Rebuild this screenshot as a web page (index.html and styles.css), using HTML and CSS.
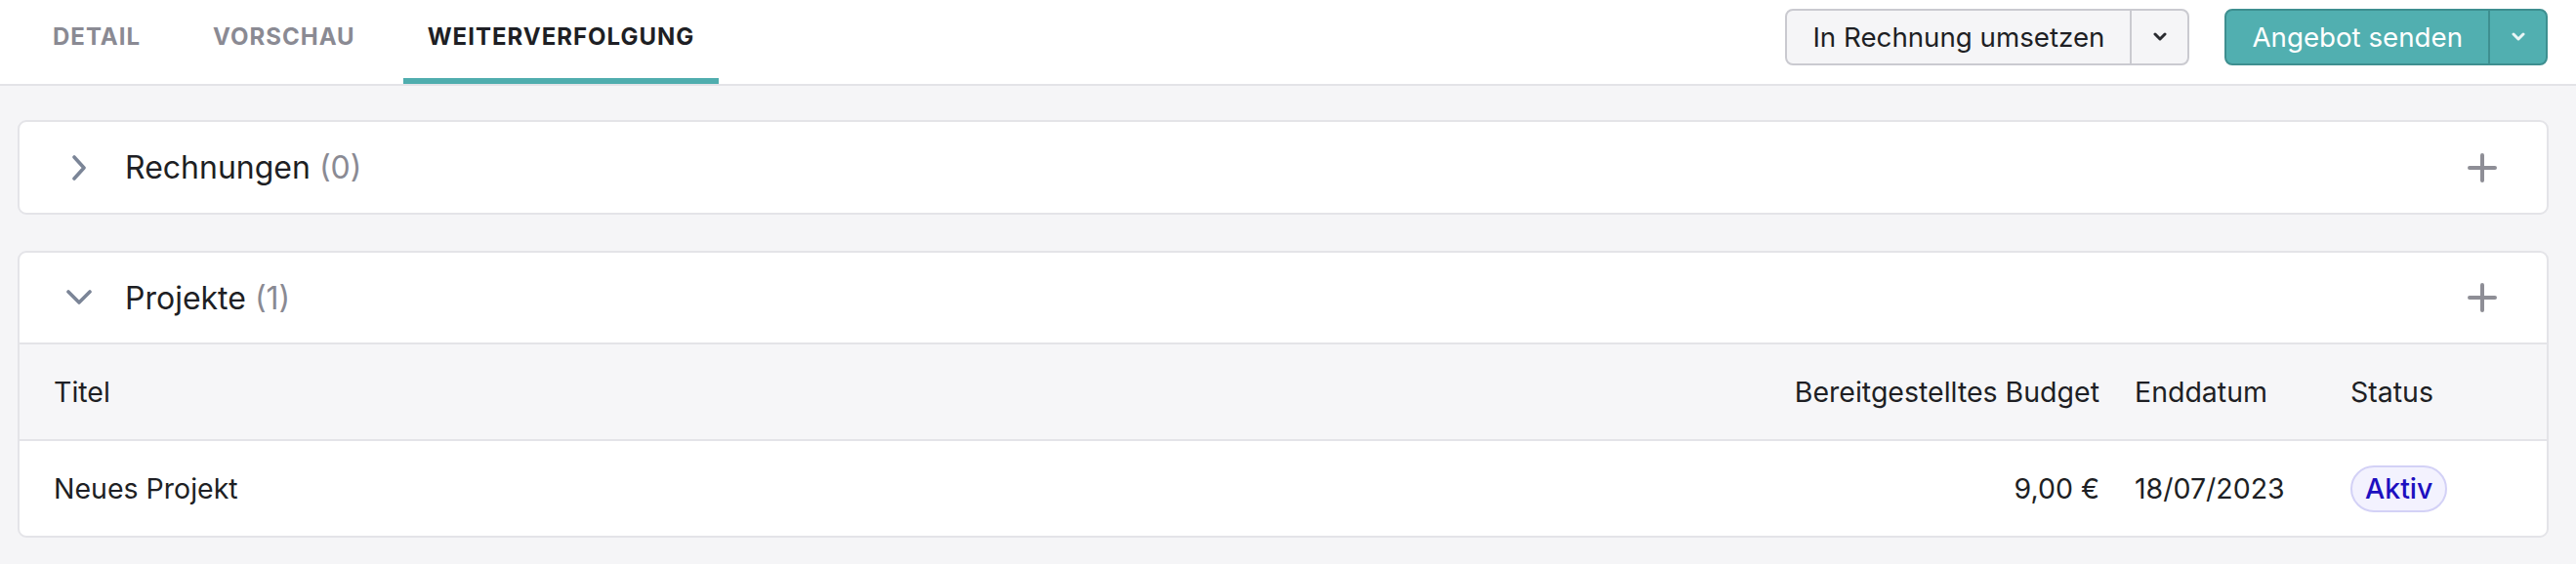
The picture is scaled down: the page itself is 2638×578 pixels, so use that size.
FILE: index.html
```html
<!DOCTYPE html>
<html lang="de">
<head>
<meta charset="utf-8">
<link rel="stylesheet" href="styles.css">
</head>
<body>
<header class="topbar">
  <nav class="tabs">
    <a class="tab">DETAIL</a>
    <a class="tab">VORSCHAU</a>
    <a class="tab active">WEITERVERFOLGUNG</a>
  </nav>
  <div class="actions">
    <div class="split split-light">
      <span class="split-main">In Rechnung umsetzen</span>
      <span class="split-caret"><svg width="14" height="10" viewBox="0 0 14 10"><polyline points="2,2 7,7 12,2" fill="none" stroke="currentColor" stroke-width="3" stroke-linecap="round" stroke-linejoin="round"/></svg></span>
    </div>
    <div class="split split-primary">
      <span class="split-main">Angebot senden</span>
      <span class="split-caret"><svg width="14" height="10" viewBox="0 0 14 10"><polyline points="2,2 7,7 12,2" fill="none" stroke="currentColor" stroke-width="3" stroke-linecap="round" stroke-linejoin="round"/></svg></span>
    </div>
  </div>
</header>
<main class="content">
  <section class="card">
    <div class="card-head">
      <span class="toggle"><svg width="24" height="26" viewBox="0 0 24 26"><polyline points="7,2 17,13 7,24" fill="none" stroke="currentColor" stroke-width="3.6" stroke-linecap="round" stroke-linejoin="round"/></svg></span>
      <h2 class="card-title">Rechnungen <span class="count">(0)</span></h2>
      <span class="add"><svg width="30" height="30" viewBox="0 0 30 30"><path d="M15 2V28M2 15H28" stroke="currentColor" stroke-width="4" stroke-linecap="round"/></svg></span>
    </div>
  </section>
  <section class="card">
    <div class="card-head card-head-open">
      <span class="toggle"><svg width="26" height="26" viewBox="0 0 26 26"><polyline points="2,7 13,18 24,7" fill="none" stroke="currentColor" stroke-width="3.6" stroke-linecap="round" stroke-linejoin="round"/></svg></span>
      <h2 class="card-title">Projekte <span class="count">(1)</span></h2>
      <span class="add"><svg width="30" height="30" viewBox="0 0 30 30"><path d="M15 2V28M2 15H28" stroke="currentColor" stroke-width="4" stroke-linecap="round"/></svg></span>
    </div>
    <div class="table">
      <div class="row row-head">
        <div class="cell c-title">Titel</div>
        <div class="cell c-budget">Bereitgestelltes Budget</div>
        <div class="cell c-date">Enddatum</div>
        <div class="cell c-status">Status</div>
      </div>
      <div class="row">
        <div class="cell c-title">Neues Projekt</div>
        <div class="cell c-budget">9,00 €</div>
        <div class="cell c-date">18/07/2023</div>
        <div class="cell c-status"><span class="badge">Aktiv</span></div>
      </div>
    </div>
  </section>
</main>
</body>
</html>
```
FILE: styles.css
```css
* { box-sizing: border-box; }
html, body { margin: 0; padding: 0; }
body {
  font-family: Inter, "Noto Sans", sans-serif;
  background: #f5f5f7;
  color: #1e1f24;
  width: 2638px;
  height: 578px;
  overflow: hidden;
}
.topbar {
  height: 88px;
  background: #fff;
  border-bottom: 2px solid #e3e3e7;
  display: flex;
  justify-content: space-between;
  align-items: flex-start;
  padding: 0 29px 0 29px;
}
.tabs {
  display: flex;
  gap: 24px;
  height: 86px;
}
.tab {
  height: 86px;
  padding: 0 25px 6px;
  border-bottom: 6px solid transparent;
  display: flex;
  align-items: center;
  font-size: 24px;
  font-weight: 700;
  letter-spacing: 1px;
  color: #8a8a93;
}
.tab.active {
  color: #1e1f24;
  border-bottom-color: #4fadae;
}
.actions {
  display: flex;
  gap: 36px;
  padding-top: 9px;
}
.split {
  display: flex;
  height: 58px;
  border-radius: 8px;
  border: 2px solid #cacad0;
  background: #f5f5f7;
  font-size: 27.7px;
  overflow: hidden;
}
.split-main {
  display: flex;
  align-items: center;
  padding: 0 26px;
  border-right: 2px solid #cacad0;
}
.split-caret {
  width: 57px;
  display: flex;
  align-items: center;
  justify-content: center;
  color: #2a2b30;
}
.split-primary {
  background: #51afb0;
  border-color: #3e8f90;
  color: #fff;
}
.split-primary .split-main { border-right-color: #3e8f90; }
.split-primary .split-caret { color: #eaf6f6; }
.content {
  padding: 35px 28px 0 18px;
  display: flex;
  flex-direction: column;
  gap: 37px;
}
.card {
  background: #fff;
  border: 2px solid #e4e4e8;
  border-radius: 9px;
  overflow: hidden;
}
.card-head {
  height: 93px;
  display: flex;
  align-items: center;
  padding: 0 51px 0 48px;
}
.card-head-open { border-bottom: 2px solid #e4e4e8; height: 94px; }
.toggle {
  width: 26px;
  display: flex;
  justify-content: center;
  color: #7b8597;
  margin-right: 34px;
}
.card-title {
  flex: 1;
  margin: 0;
  font-size: 32px;
  font-weight: 400;
  color: #1e1f24;
}
.count { color: #8a8a93; }
.add { color: #8e8e96; display: flex; }
.row {
  display: grid;
  grid-template-columns: 1fr auto 221px 219px;
  height: 97px;
  align-items: center;
  font-size: 28.5px;
}
.row-head {
  background: #f6f6f8;
  border-bottom: 2px solid #e4e4e8;
  height: 99px;
}
.cell { padding: 0 18px; }
.c-title { padding-left: 35px; }
.c-budget { text-align: right; }
.badge {
  display: inline-flex;
  align-items: center;
  height: 48px;
  padding: 0 13px;
  border-radius: 24px;
  border: 2px solid #d3d1f6;
  background: #f3f2fe;
  color: #1d10c0;
  font-weight: 500;
}
```
